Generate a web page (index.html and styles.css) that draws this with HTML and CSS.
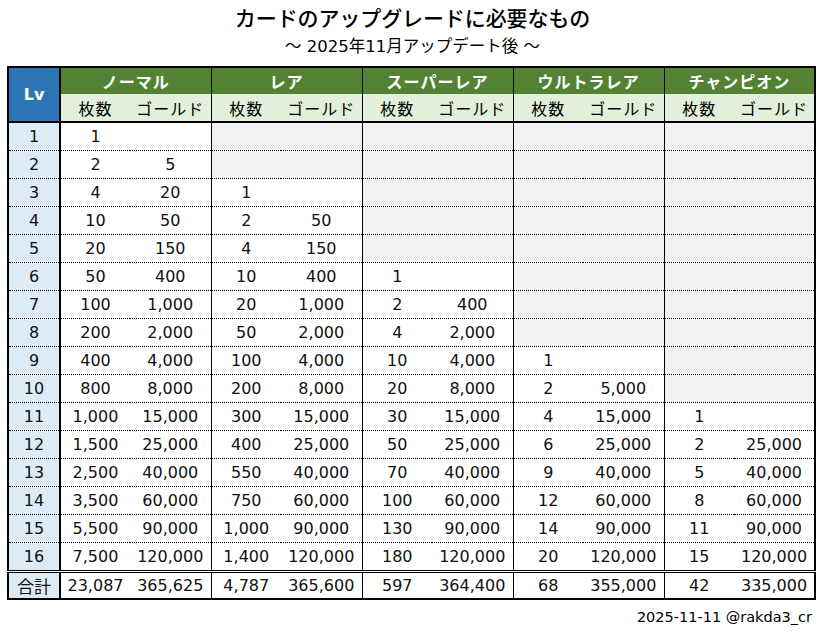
FILE: index.html
```html
<!DOCTYPE html>
<html lang="ja">
<head>
<meta charset="utf-8">
<link rel="stylesheet" href="styles.css">
</head>
<body>
<div class="page">
  <h1 class="title">カードのアップグレードに必要なもの</h1>
  <p class="subtitle">〜 2025年11月アップデート後 〜</p>
  <table class="grid">
    <colgroup>
      <col class="c-lv">
      <col class="c-n"><col class="c-g">
      <col class="c-n"><col class="c-g">
      <col class="c-n"><col class="c-g">
      <col class="c-n"><col class="c-g">
      <col class="c-n"><col class="c-g">
    </colgroup>
    <thead>
      <tr class="h1">
        <th class="lvh" rowspan="2">Lv</th>
        <th class="gh" colspan="2">ノーマル</th>
        <th class="gh" colspan="2">レア</th>
        <th class="gh" colspan="2">スーパーレア</th>
        <th class="gh" colspan="2">ウルトラレア</th>
        <th class="gh" colspan="2">チャンピオン</th>
      </tr>
      <tr class="h2">
        <th class="sh g">枚数</th><th class="sh">ゴールド</th>
        <th class="sh g">枚数</th><th class="sh">ゴールド</th>
        <th class="sh g">枚数</th><th class="sh">ゴールド</th>
        <th class="sh g">枚数</th><th class="sh">ゴールド</th>
        <th class="sh g">枚数</th><th class="sh">ゴールド</th>
      </tr>
    </thead>
    <tbody>
      <tr><td class="lv">1</td><td class="g">1</td><td></td><td class="g na" colspan="2"></td><td class="g na" colspan="2"></td><td class="g na" colspan="2"></td><td class="g na" colspan="2"></td></tr>
      <tr><td class="lv">2</td><td class="g">2</td><td>5</td><td class="g na" colspan="2"></td><td class="g na" colspan="2"></td><td class="g na" colspan="2"></td><td class="g na" colspan="2"></td></tr>
      <tr><td class="lv">3</td><td class="g">4</td><td>20</td><td class="g">1</td><td></td><td class="g na" colspan="2"></td><td class="g na" colspan="2"></td><td class="g na" colspan="2"></td></tr>
      <tr><td class="lv">4</td><td class="g">10</td><td>50</td><td class="g">2</td><td>50</td><td class="g na" colspan="2"></td><td class="g na" colspan="2"></td><td class="g na" colspan="2"></td></tr>
      <tr><td class="lv">5</td><td class="g">20</td><td>150</td><td class="g">4</td><td>150</td><td class="g na" colspan="2"></td><td class="g na" colspan="2"></td><td class="g na" colspan="2"></td></tr>
      <tr><td class="lv">6</td><td class="g">50</td><td>400</td><td class="g">10</td><td>400</td><td class="g">1</td><td></td><td class="g na" colspan="2"></td><td class="g na" colspan="2"></td></tr>
      <tr><td class="lv">7</td><td class="g">100</td><td>1,000</td><td class="g">20</td><td>1,000</td><td class="g">2</td><td>400</td><td class="g na" colspan="2"></td><td class="g na" colspan="2"></td></tr>
      <tr><td class="lv">8</td><td class="g">200</td><td>2,000</td><td class="g">50</td><td>2,000</td><td class="g">4</td><td>2,000</td><td class="g na" colspan="2"></td><td class="g na" colspan="2"></td></tr>
      <tr><td class="lv">9</td><td class="g">400</td><td>4,000</td><td class="g">100</td><td>4,000</td><td class="g">10</td><td>4,000</td><td class="g">1</td><td></td><td class="g na" colspan="2"></td></tr>
      <tr><td class="lv">10</td><td class="g">800</td><td>8,000</td><td class="g">200</td><td>8,000</td><td class="g">20</td><td>8,000</td><td class="g">2</td><td>5,000</td><td class="g na" colspan="2"></td></tr>
      <tr><td class="lv">11</td><td class="g">1,000</td><td>15,000</td><td class="g">300</td><td>15,000</td><td class="g">30</td><td>15,000</td><td class="g">4</td><td>15,000</td><td class="g">1</td><td></td></tr>
      <tr><td class="lv">12</td><td class="g">1,500</td><td>25,000</td><td class="g">400</td><td>25,000</td><td class="g">50</td><td>25,000</td><td class="g">6</td><td>25,000</td><td class="g">2</td><td>25,000</td></tr>
      <tr><td class="lv">13</td><td class="g">2,500</td><td>40,000</td><td class="g">550</td><td>40,000</td><td class="g">70</td><td>40,000</td><td class="g">9</td><td>40,000</td><td class="g">5</td><td>40,000</td></tr>
      <tr><td class="lv">14</td><td class="g">3,500</td><td>60,000</td><td class="g">750</td><td>60,000</td><td class="g">100</td><td>60,000</td><td class="g">12</td><td>60,000</td><td class="g">8</td><td>60,000</td></tr>
      <tr><td class="lv">15</td><td class="g">5,500</td><td>90,000</td><td class="g">1,000</td><td>90,000</td><td class="g">130</td><td>90,000</td><td class="g">14</td><td>90,000</td><td class="g">11</td><td>90,000</td></tr>
      <tr class="last"><td class="lv">16</td><td class="g">7,500</td><td>120,000</td><td class="g">1,400</td><td>120,000</td><td class="g">180</td><td>120,000</td><td class="g">20</td><td>120,000</td><td class="g">15</td><td>120,000</td></tr>
    </tbody>
    <tfoot>
      <tr class="total"><td class="lv">合計</td><td class="g">23,087</td><td>365,625</td><td class="g">4,787</td><td>365,600</td><td class="g">597</td><td>364,400</td><td class="g">68</td><td>355,000</td><td class="g">42</td><td>335,000</td></tr>
    </tfoot>
  </table>
  <p class="credit">2025-11-11 @rakda3_cr</p>
</div>
</body>
</html>
```

FILE: styles.css
```css
html, body {
  margin: 0;
  padding: 0;
  background: #ffffff;
}

body {
  font-family: "DejaVu Sans", "Noto Sans CJK JP", sans-serif;
  color: #000000;
}

.page {
  width: 825px;
  height: 634px;
  overflow: hidden;
}

.title {
  margin: 3px 0 0 0;
  font-family: "Noto Sans CJK JP", sans-serif;
  font-size: 21px;
  font-weight: 500;
  line-height: 28px;
  text-align: center;
  letter-spacing: -0.1px;
}

.subtitle {
  margin: 4px 0 0 0;
  font-size: 16.5px;
  line-height: 24px;
  text-align: center;
}

.grid {
  margin: 7px 0 0 7px;
  width: 809px;
  table-layout: fixed;
  border-collapse: collapse;
  border: 2px solid #000;
  font-size: 16px;
}

.c-lv { width: 52px; }
.c-n { width: 70px; }
.c-g { width: 81px; }

.grid th,
.grid td {
  padding: 0;
  text-align: center;
  white-space: nowrap;
  overflow: hidden;
}

.grid td {
  height: 27px;
  border-bottom: 1px dotted #000;
  color: #111;
}

.h1 th {
  height: 26px;
}

.h2 th {
  height: 27px;
  border-bottom: 2px solid #000;
}

.lvh {
  background: #2e75b6;
  color: #ffffff;
  font-weight: bold;
  font-size: 16px;
  border-right: 2px solid #000;
  border-bottom: 2px solid #000;
}

.gh {
  background: #548235;
  color: #ffffff;
  font-family: "Noto Sans CJK JP", sans-serif;
  font-weight: bold;
  font-size: 16px;
  border-left: 1px solid #000;
  letter-spacing: 1px;
}

.sh {
  background: #e2efda;
  font-family: "Noto Sans CJK JP", sans-serif;
  font-weight: normal;
  font-size: 16px;
  letter-spacing: 1px;
}

.grid .g {
  border-left: 1px solid #000;
}

.grid td.lv {
  background: #ddebf7;
  border-right: 2px solid #000;
}

.grid td.na {
  background: #f2f2f2;
}

.last td {
  border-bottom: 3px double #000;
}

.total td {
  height: 25px;
  border-bottom: none;
}

.total td.lv {
  font-family: "Noto Sans CJK JP", sans-serif;
  font-size: 17px;
}

.credit {
  margin: 8px 13px 0 0;
  font-size: 14.5px;
  line-height: 18px;
  text-align: right;
}
```
